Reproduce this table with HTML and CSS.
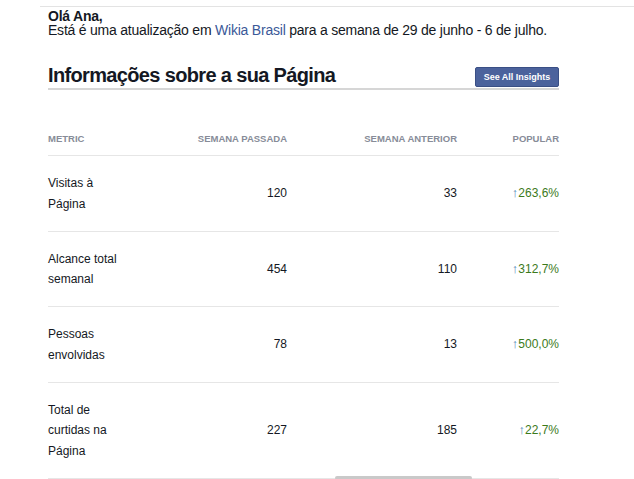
FILE: index.html
```html
<!DOCTYPE html>
<html lang="pt">
<head>
<meta charset="utf-8">
<link rel="stylesheet" href="styles.css">
</head>
<body>
<div class="page">
  <div class="inner">
    <div class="greeting">
      <div class="hello">Olá Ana,</div>
      <div class="intro">Está é uma atualização em <a class="link" href="#">Wikia Brasil</a> para a semana de 29 de junho - 6 de julho.</div>
    </div>
    <div class="section-head">
      <h1 class="title">Informações sobre a sua Página</h1>
      <a class="btn" href="#">See All Insights</a>
    </div>
    <table class="stats">
      <colgroup>
        <col class="c1"><col class="c2"><col class="c3"><col class="c4">
      </colgroup>
      <thead>
        <tr><th class="left">METRIC</th><th>SEMANA PASSADA</th><th>SEMANA ANTERIOR</th><th>POPULAR</th></tr>
      </thead>
      <tbody>
        <tr><td class="left">Visitas à Página</td><td>120</td><td>33</td><td><span class="up">↑</span><span class="pct">263,6%</span></td></tr>
        <tr><td class="left">Alcance total semanal</td><td>454</td><td>110</td><td><span class="up">↑</span><span class="pct">312,7%</span></td></tr>
        <tr><td class="left">Pessoas envolvidas</td><td>78</td><td>13</td><td><span class="up">↑</span><span class="pct">500,0%</span></td></tr>
        <tr><td class="left">Total de curtidas na Página</td><td>227</td><td>185</td><td><span class="up">↑</span><span class="pct">22,7%</span></td></tr>
      </tbody>
    </table>
  </div>
</div>
<div class="scroll-thumb"></div>
</body>
</html>
```
FILE: styles.css
```css
html, body {
  margin: 0;
  padding: 0;
  background: #ffffff;
  overflow: hidden;
}
body {
  font-family: "Liberation Sans", Arial, Helvetica, sans-serif;
  color: #141823;
  height: 479px;
}
.page {
  margin-top: 6px;
  margin-left: 40px;
  border-top: 1px solid #e3e3e3;
}
.inner {
  padding-left: 8px;
  width: 511px;
}
.greeting {
  padding-top: 2px;
  font-size: 14px;
  line-height: 14px;
  letter-spacing: -0.22px;
  white-space: nowrap;
}
.hello {
  font-weight: bold;
}
.link {
  color: #3b5998;
  text-decoration: none;
}
.section-head {
  display: flex;
  align-items: flex-end;
  justify-content: space-between;
  margin-top: 26px;
  border-bottom: 2px solid #d6d6d6;
  padding-bottom: 1px;
}
.title {
  margin: 0;
  font-size: 20px;
  line-height: 24px;
  font-weight: bold;
  letter-spacing: -0.65px;
}
.btn {
  display: block;
  width: 84px;
  height: 20px;
  box-sizing: border-box;
  margin-bottom: 0;
  background: #4b629c;
  border: 1px solid #3a4f85;
  border-radius: 2px;
  color: #ffffff;
  font-size: 9px;
  font-weight: bold;
  line-height: 18px;
  text-align: center;
  text-decoration: none;
}
.stats {
  width: 511px;
  table-layout: fixed;
  border-collapse: collapse;
  margin-top: 43px;
}
.c1 { width: 80px; }
.c2 { width: 159px; }
.c3 { width: 170px; }
.c4 { width: 102px; }
.stats th {
  font-size: 9.5px;
  font-weight: bold;
  color: #878c98;
  text-align: right;
  padding: 0 0 10px 0;
  line-height: 12px;
  border-bottom: 1px solid #e6e6e6;
}
.stats td {
  font-size: 12px;
  line-height: 20.5px;
  text-align: right;
  padding: 17px 0 16.5px;
  border-bottom: 1px solid #e6e6e6;
  vertical-align: middle;
}
.stats .left {
  text-align: left;
}
.up {
  color: #4a7fb5;
  font-size: 13px;
}
.pct {
  color: #3c7a1b;
}
.scroll-thumb {
  position: absolute;
  left: 335px;
  top: 476px;
  width: 137px;
  height: 4px;
  border-radius: 2px;
  background: #c9c9c9;
}
```
